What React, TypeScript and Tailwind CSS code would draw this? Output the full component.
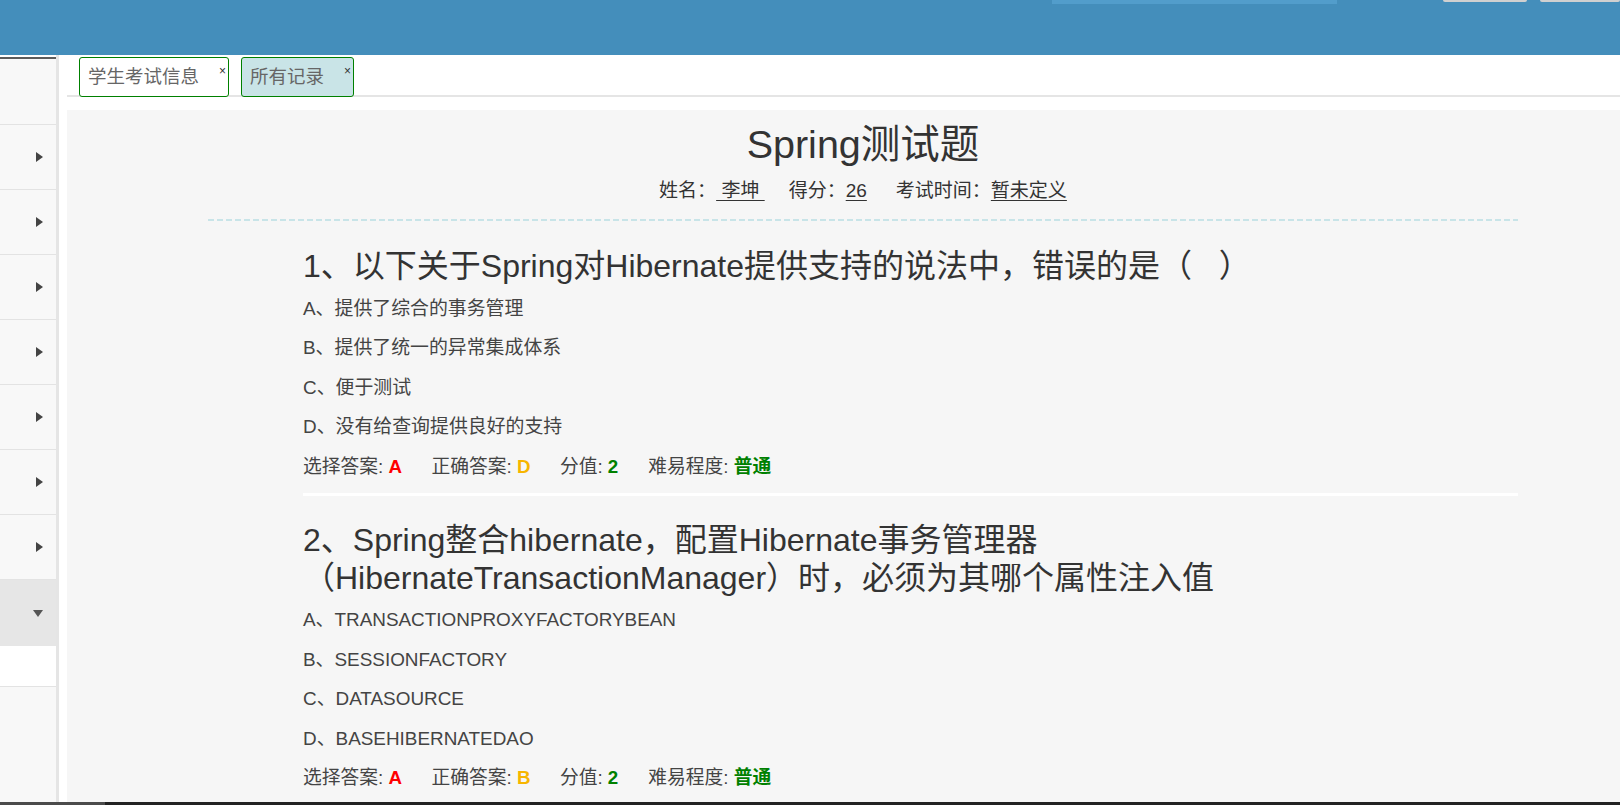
import React from 'react';

type Question = {
    lines: string[];
    options: string[];
    chosen: string;
    correct: string;
    score: number;
    level: string;
};

const questions: Question[] = [
    {
        lines: ['1、以下关于Spring对Hibernate提供支持的说法中，错误的是（\u00a0\u00a0\u00a0）'],
        options: ['A、提供了综合的事务管理', 'B、提供了统一的异常集成体系', 'C、便于测试', 'D、没有给查询提供良好的支持'],
        chosen: 'A',
        correct: 'D',
        score: 2,
        level: '普通',
    },
    {
        lines: ['2、Spring整合hibernate，配置Hibernate事务管理器', '（HibernateTransactionManager）时，必须为其哪个属性注入值'],
        options: ['A、TRANSACTIONPROXYFACTORYBEAN', 'B、SESSIONFACTORY', 'C、DATASOURCE', 'D、BASEHIBERNATEDAO'],
        chosen: 'A',
        correct: 'B',
        score: 2,
        level: '普通',
    },
];

const menuCount = 7;

const Sidebar: React.FC = () => (
    <aside className="w-[59px] shrink-0 bg-[#f8f8f8] border-r-[3px] border-[#e5e5e5] flex flex-col">
        <div className="h-[2px] bg-white" />
        <div className="h-[2px] bg-[#5c5c5c]" />
        <div className="h-[65px]" />
        {Array.from({ length: menuCount }).map((_, i) => (
            <div key={i} className="h-[65px] border-t border-[#e3e3e3] flex items-center justify-end pr-[13px]">
                <span className="w-0 h-0 border-y-[5.5px] border-y-transparent border-l-[7px] border-l-[#444]" />
            </div>
        ))}
        <div className="h-[67px] border-t border-[#e3e3e3] bg-[#e6e6e6] flex items-center justify-end pr-[13px]">
            <span className="w-0 h-0 border-x-[5.5px] border-x-transparent border-t-[7px] border-t-[#555]" />
        </div>
        <div className="h-[40px] bg-white" />
        <div className="flex-1 border-t border-[#e3e3e3]" />
    </aside>
);

const Tab: React.FC<{ label: string; active?: boolean }> = ({ label, active }) => (
    <div
        className={
            active
                ? 'relative -mb-[2px] h-[40px] pl-[8px] pr-[29px] border border-[#008000] rounded-[3px] bg-[#c9e4e7] text-[18.5px] leading-[38px] text-[#666]'
                : 'relative -mb-[2px] h-[40px] pl-[8px] pr-[29px] border border-[#008000] rounded-[3px] bg-white text-[18.5px] leading-[38px] text-[#666]'
        }
    >
        {label}
        <span className="absolute top-[7px] right-[2px] text-[12px] leading-none text-[#333]">×</span>
    </div>
);

const QuestionBlock: React.FC<{ q: Question; first?: boolean; last?: boolean }> = ({ q, first, last }) => (
    <div className={first ? 'pt-[27px]' : 'pt-[26px]'}>
        <h2 className="text-[32px] text-[#333] mb-[3px]">
            {q.lines.map((line) => (
                <div key={line} className="h-[37.5px] leading-[37.5px] whitespace-nowrap">
                    {line}
                </div>
            ))}
        </h2>
        {q.options.map((opt) => (
            <div key={opt} className="h-[39.5px] text-[18.9px] leading-[39.5px] text-[#444]">
                {opt}
            </div>
        ))}
        <div className="h-[39.5px] text-[18.75px] leading-[39.5px] text-[#444]">
            <span className="mr-[29.5px]">
                选择答案: <b className="text-[#ff0000]">{q.chosen}</b>
            </span>
            <span className="mr-[29.5px]">
                正确答案: <b className="text-[#f7b500]">{q.correct}</b>
            </span>
            <span className="mr-[30px]">
                分值: <b className="text-[#008000]">{q.score}</b>
            </span>
            <span>
                难易程度: <b className="text-[#008000]">{q.level}</b>
            </span>
        </div>
        {!last && <div className="mt-[7px] h-[3px] bg-white" />}
    </div>
);

const App: React.FC = () => {
    return (
        <div className="h-[805px] w-full overflow-hidden flex flex-col font-[family-name:'Liberation_Sans','Noto_Sans_CJK_SC',sans-serif]">
            <header className="h-[55px] shrink-0 bg-[#448ebb] flex items-start">
                <div className="ml-[1052px] w-[285px] h-[4px] bg-[#529dcb]" />
                <div className="ml-[106px] w-[84px] h-[2px] rounded-b-[2px] bg-[#d0d0d0]" />
                <div className="ml-[13px] w-[80px] h-[2px] rounded-b-[2px] bg-[#d0d0d0]" />
            </header>

            <div className="flex flex-1 min-h-0">
                <Sidebar />

                <main className="flex-1 flex flex-col pl-[8px] bg-white min-w-0">
                    <div className="h-[42px] shrink-0 pt-[2px] pl-[12px] flex gap-[12px] border-b-2 border-[#e5e5e5]">
                        <Tab label="学生考试信息" />
                        <Tab label="所有记录" active />
                    </div>

                    <div className="mt-[13px] flex-1 bg-[#f6f6f6] overflow-hidden">
                        <div className="ml-[141px] w-[1310px]">
                            <h1 className="pt-[12px] text-center text-[39.5px] leading-[44px] text-[#333]">Spring测试题</h1>
                            <p className="mt-[12px] text-center text-[19px] leading-[26px] text-[#333]">
                                <span className="mr-[24px]">
                                    姓名：<u className="underline-offset-[3px]">&nbsp;李坤&nbsp;</u>
                                </span>
                                <span className="mr-[29px]">
                                    得分：<u className="underline-offset-[3px]">26</u>
                                </span>
                                <span>
                                    考试时间：<u className="underline-offset-[3px]">暂未定义</u>
                                </span>
                            </p>
                            <div className="mt-[15px] h-[2px] bg-[repeating-linear-gradient(90deg,#c8e4e8_0_6px,transparent_6px_9px)]" />

                            <div className="ml-[95px]">
                                {questions.map((q, idx) => (
                                    <QuestionBlock key={idx} q={q} first={idx === 0} last={idx === questions.length - 1} />
                                ))}
                            </div>
                        </div>
                    </div>
                </main>
            </div>

            <div className="h-[3px] shrink-0 flex">
                <div className="w-[105px] bg-[#4b4b4b]" />
                <div className="flex-1 bg-[#222]" />
            </div>
        </div>
    );
};

export default App;
